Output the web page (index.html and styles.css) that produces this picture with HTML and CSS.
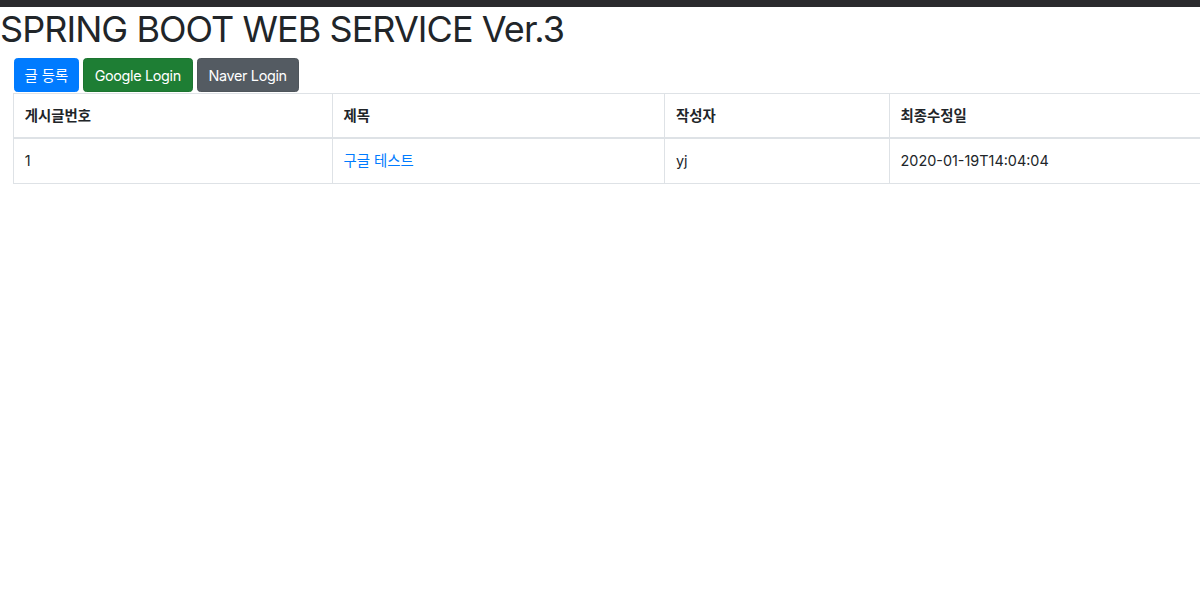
FILE: index.html
```html
<!DOCTYPE html>
<html lang="ko">
<head>
<meta charset="utf-8">
<title>SPRING BOOT WEB SERVICE Ver.3</title>
<link rel="stylesheet" href="styles.css">
</head>
<body>
<div class="topbar"></div>
<h1 class="title">SPRING BOOT WEB SERVICE Ver.3</h1>
<div class="col">
  <div class="actions">
    <a class="btn btn-primary">글 등록</a>
    <a class="btn btn-success">Google Login</a>
    <a class="btn btn-secondary">Naver Login</a>
  </div>
  <table class="board">
    <thead>
      <tr>
        <th class="c1">게시글번호</th>
        <th class="c2">제목</th>
        <th class="c3">작성자</th>
        <th class="c4">최종수정일</th>
      </tr>
    </thead>
    <tbody>
      <tr>
        <td>1</td>
        <td><a class="link">구글 테스트</a></td>
        <td>yj</td>
        <td>2020-01-19T14:04:04</td>
      </tr>
    </tbody>
  </table>
</div>
</body>
</html>
```
FILE: styles.css
```css
html, body {
  margin: 0;
  padding: 0;
  background: #fff;
  overflow: hidden;
}
body {
  font-family: Inter, "Noto Sans CJK KR", "Noto Sans", sans-serif;
  font-size: 14.4px;
  line-height: 1.5;
  color: #212529;
}
.topbar {
  height: 7px;
  background: #2a2a2d;
}
.title {
  margin: 1px 0 7px 0;
  font-size: 36px;
  font-weight: 400;
  line-height: 1.2;
  letter-spacing: -0.95px;
  color: #212529;
}
.col {
  padding-left: 13px;
}
.actions {
  display: flex;
  gap: 4px;
  padding-left: 1px;
}
.btn {
  display: inline-block;
  box-sizing: border-box;
  height: 34px;
  padding: 5.4px 10.9px;
  font-size: 14.4px;
  line-height: 21.6px;
  letter-spacing: -0.35px;
  color: #fff;
  border: 1px solid transparent;
  border-radius: 3.6px;
}
.btn-primary { background: #007bff; border-color: #007bff; letter-spacing: 0; padding: 5.4px 9.5px; }
.btn-success { background: #1e7e34; border-color: #1c7430; }
.btn-secondary { background: #545b62; border-color: #4e555b; }
.board {
  width: 1240px;
  border-collapse: collapse;
  margin-top: 1px;
}
.board th, .board td {
  border: 1px solid #dee2e6;
  padding: 10.8px;
  text-align: left;
  vertical-align: top;
  line-height: 21.6px;
}
.board th {
  font-weight: 700;
  border-bottom: 2px solid #dee2e6;
}
.c1 { width: 296px; }
.c2 { width: 310px; }
.c3 { width: 202px; }
.link {
  color: #007bff;
}
```
